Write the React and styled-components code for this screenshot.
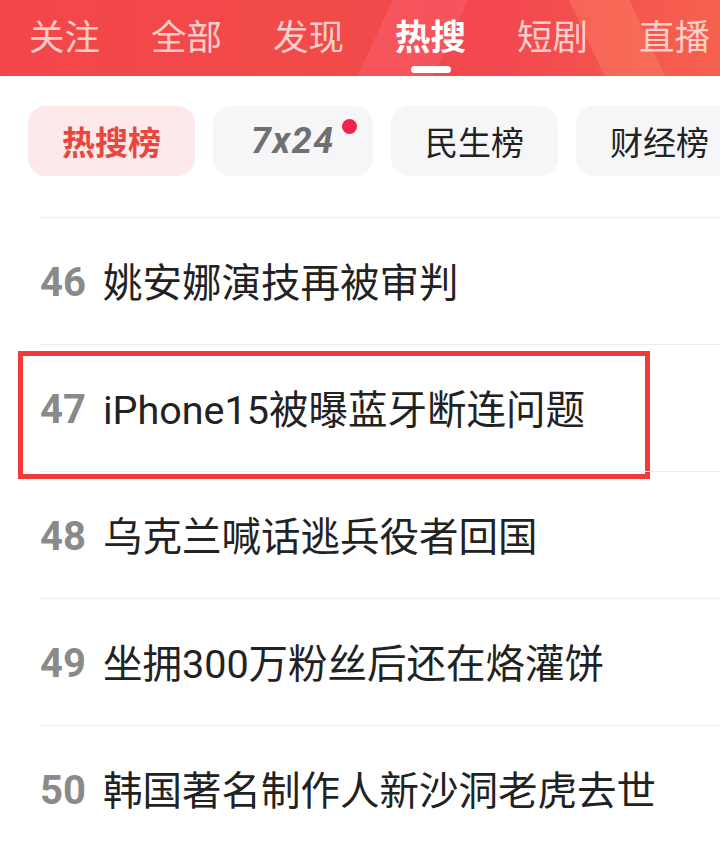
import React from "react";
import styled, { createGlobalStyle } from "styled-components";

const Global = createGlobalStyle`
  html, body { margin: 0; padding: 0; background: #ffffff; }
  body { font-family: Roboto, "Noto Sans CJK SC", "Noto Sans", sans-serif; }
  #root { width: 720px; height: 846px; overflow: hidden; }
`;

const Page = styled.div`
  width: 720px;
  height: 846px;
  overflow: hidden;
  background: #fff;
  display: flex;
  flex-direction: column;
`;

const Header = styled.header`
  position: relative;
  height: 76px;
  flex: none;
  overflow: hidden;
  background:
    linear-gradient(115deg, transparent 0 52%, rgba(255,120,140,0.25) 52% 62%, transparent 62% 100%),
    linear-gradient(65deg, transparent 0 80%, rgba(255,150,110,0.3) 80% 88%, transparent 88% 100%),
    linear-gradient(90deg, #f3464a 0%, #f24a49 45%, #f3474f 70%, #f6614e 100%);
`;

const Tabs = styled.nav`
  display: flex;
  align-items: center;
  gap: 51px;
  padding: 0 0 0 29px;
  height: 70px;
  white-space: nowrap;
`;

const Tab = styled.span`
  position: relative;
  font-family: "Noto Sans CJK SC", sans-serif;
  font-size: 35.5px;
  line-height: 70px;
  font-weight: ${(p) => (p.$active ? 700 : 400)};
  color: ${(p) => (p.$active ? "#ffffff" : "rgba(255,225,222,0.88)")};
`;

const Indicator = styled.span`
  position: absolute;
  left: 50%;
  bottom: -3px;
  width: 40px;
  height: 7px;
  margin-left: -20px;
  border-radius: 4px;
  background: #fff;
`;

const ChipRow = styled.div`
  display: flex;
  gap: 18px;
  padding: 30px 0 41px 28px;
  white-space: nowrap;
  overflow: hidden;
  flex: none;
`;

const Chip = styled.div`
  position: relative;
  flex: none;
  height: 70px;
  padding: 0 ${(p) => p.$pad || 34}px;
  border-radius: 18px;
  display: flex;
  align-items: center;
  background: ${(p) => (p.$active ? "#fde9e9" : "#f6f6f8")};
  color: ${(p) => (p.$active ? "#e8473f" : "#222222")};
  font-family: "Noto Sans CJK SC", sans-serif;
  font-size: 33px;
  font-weight: ${(p) => (p.$active ? 700 : 400)};
`;

const ChipItalic = styled.span`
  font-family: Roboto, sans-serif;
  font-style: italic;
  font-weight: 700;
  font-size: 36px;
  color: #707070;
  letter-spacing: 1.5px;
`;

const Dot = styled.span`
  position: absolute;
  top: 13px;
  right: 16px;
  width: 15px;
  height: 15px;
  border-radius: 50%;
  background: #f1234a;
`;

const List = styled.ul`
  list-style: none;
  margin: 0;
  padding: 0 0 0 40px;
`;

const Row = styled.li`
  position: relative;
  height: 127px;
  border-top: 1px solid #ececec;
  display: flex;
  align-items: center;
  padding-bottom: 3px;
  box-sizing: border-box;
`;

const Rank = styled.span`
  width: 63px;
  flex: none;
  padding-top: 6px;
  font-family: Roboto, sans-serif;
  font-weight: 700;
  font-size: 40px;
  line-height: 1;
  color: #8a8a8a;
`;

const Title = styled.span`
  font-family: Roboto, "Noto Sans CJK SC", sans-serif;
  font-size: 39.5px;
  color: #222222;
  white-space: nowrap;
`;

const Highlight = styled.div`
  position: absolute;
  left: -22px;
  top: 6px;
  width: 632px;
  height: 128px;
  box-sizing: border-box;
  border: 5px solid #f33a3a;
  pointer-events: none;
`;

const tabs = ["关注", "全部", "发现", "热搜", "短剧", "直播"];
const rows = [
  { n: 46, t: "姚安娜演技再被审判" },
  { n: 47, t: "iPhone15被曝蓝牙断连问题", hl: true },
  { n: 48, t: "乌克兰喊话逃兵役者回国" },
  { n: 49, t: "坐拥300万粉丝后还在烙灌饼" },
  { n: 50, t: "韩国著名制作人新沙洞老虎去世" },
];

export default function App() {
  return (
    <Page>
      <Global />
      <Header>
        <Tabs>
          {tabs.map((t) => (
            <Tab key={t} $active={t === "热搜"}>
              {t}
              {t === "热搜" && <Indicator />}
            </Tab>
          ))}
        </Tabs>
      </Header>
      <ChipRow>
        <Chip $active>热搜榜</Chip>
        <Chip $pad={38}>
          <ChipItalic>7x24</ChipItalic>
          <Dot />
        </Chip>
        <Chip>民生榜</Chip>
        <Chip>财经榜</Chip>
      </ChipRow>
      <List>
        {rows.map((r) => (
          <Row key={r.n}>
            <Rank>{r.n}</Rank>
            <Title>{r.t}</Title>
            {r.hl && <Highlight />}
          </Row>
        ))}
      </List>
    </Page>
  );
}
